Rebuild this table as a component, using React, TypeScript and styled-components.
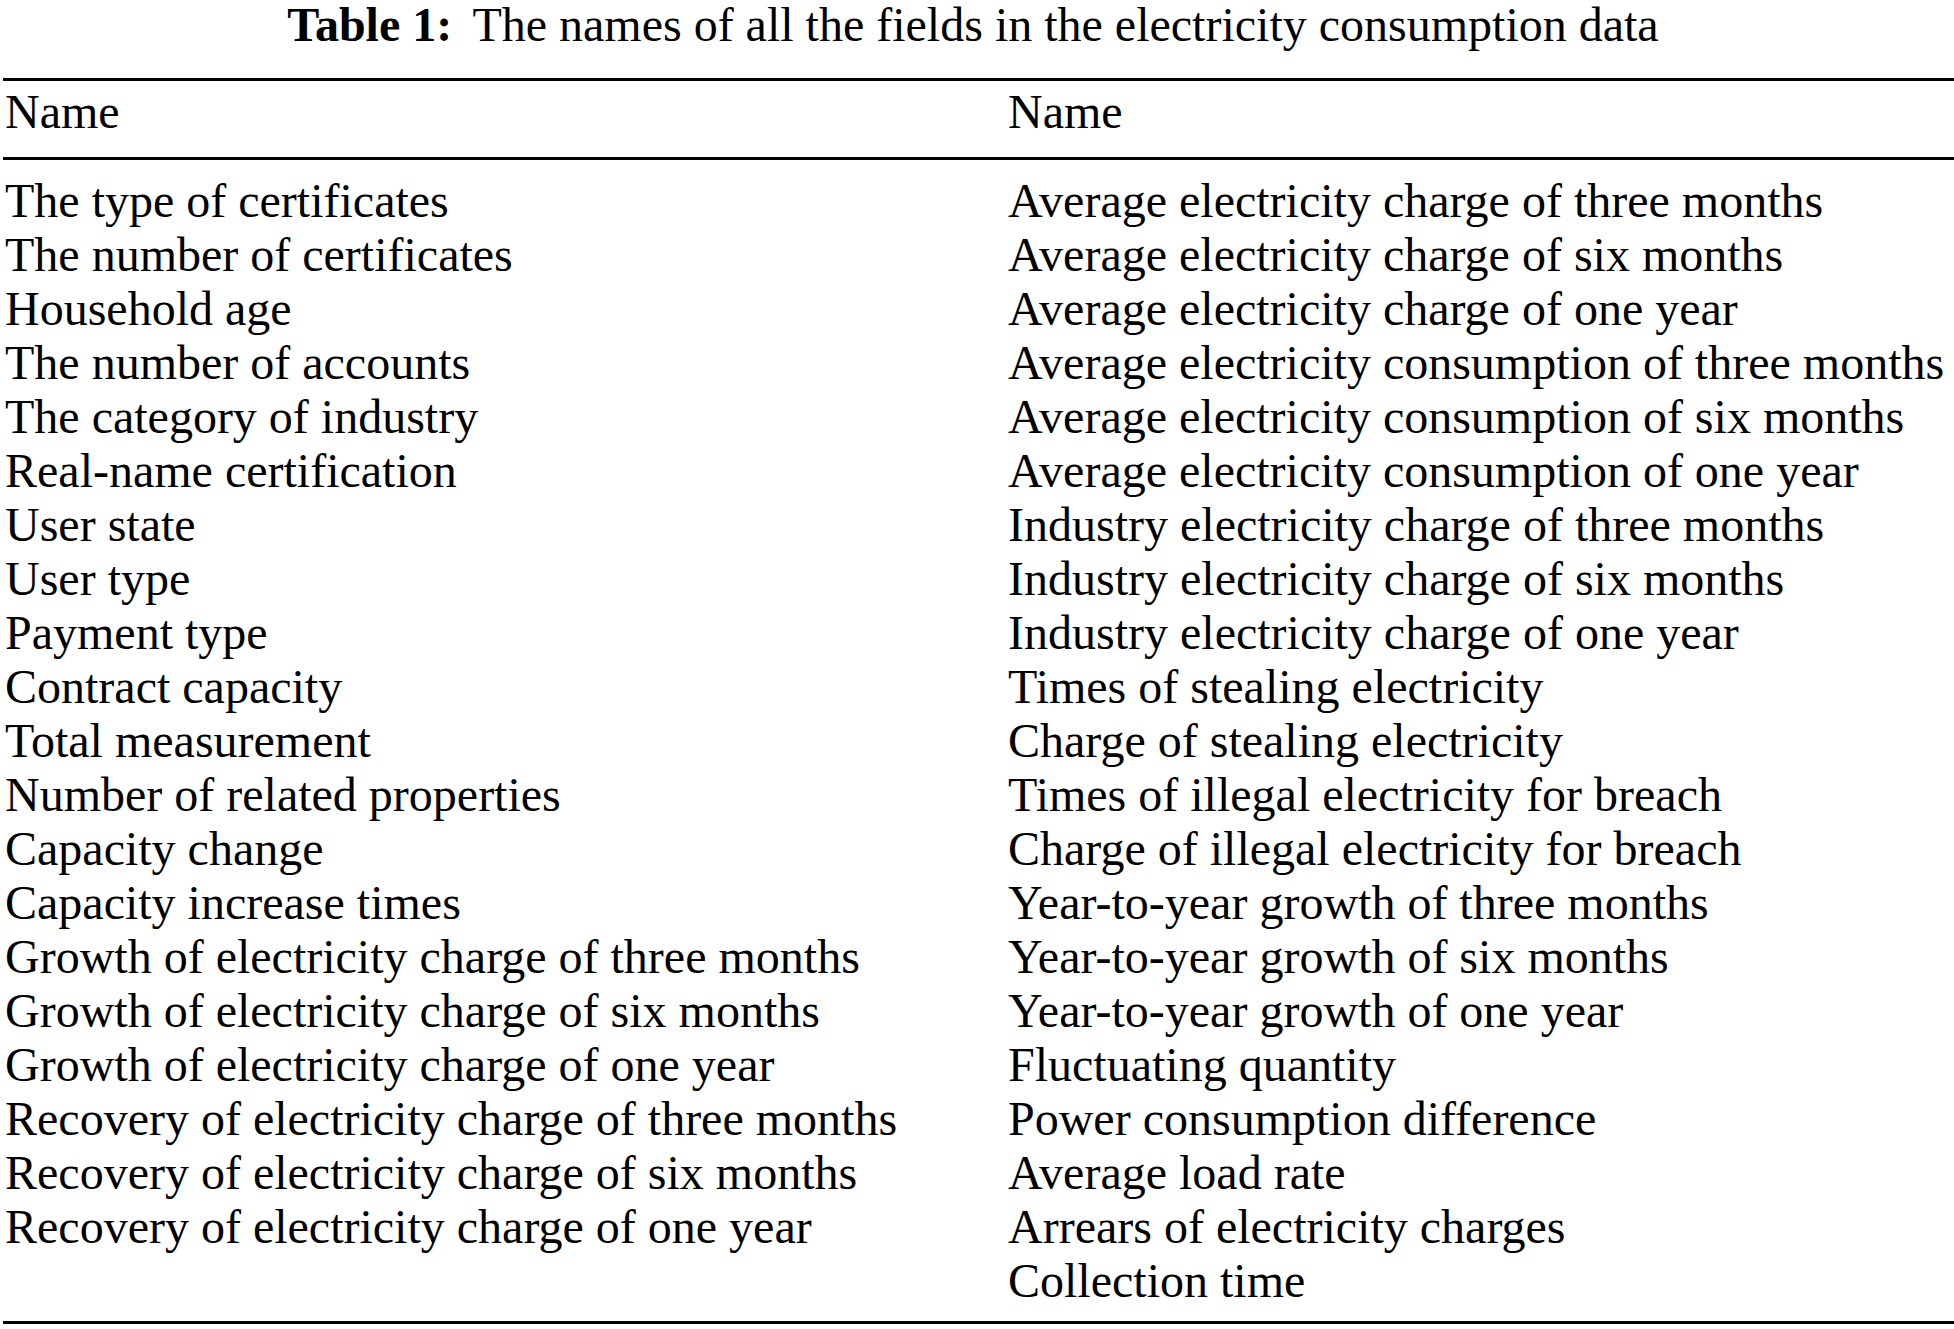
import React from 'react';
import styled, { createGlobalStyle } from 'styled-components';

const GlobalStyle = createGlobalStyle`
  html, body {
    margin: 0;
    padding: 0;
    background: #fff;
  }
  body {
    font-family: "Liberation Serif", "Times New Roman", serif;
    color: #000;
  }
`;

const Page = styled.div`
  width: 1954px;
  font-size: 48px;
`;

const Caption = styled.div`
  text-align: center;
  line-height: 50px;
  height: 50px;
  padding-right: 8px;
  white-space: nowrap;
`;

const CaptionLabel = styled.b`
  font-weight: 700;
  margin-right: 9px;
`;

const Table = styled.div`
  margin: 28px 0 0 3px;
  border-top: 3px solid #000;
  border-bottom: 3px solid #000;
`;

const Section = styled.div<{ padTop: number; padBottom: number; ruled?: boolean }>`
  display: grid;
  grid-template-columns: 1003px 1fr;
  grid-auto-rows: 54px;
  padding: ${({ padTop }) => padTop}px 0 ${({ padBottom }) => padBottom}px;
  border-bottom: ${({ ruled }) => (ruled ? '3px solid #000' : 'none')};
`;

const Cell = styled.div`
  line-height: 54px;
  white-space: nowrap;
  padding-left: 2px;
`;

const left = [
  'The type of certificates',
  'The number of certificates',
  'Household age',
  'The number of accounts',
  'The category of industry',
  'Real-name certification',
  'User state',
  'User type',
  'Payment type',
  'Contract capacity',
  'Total measurement',
  'Number of related properties',
  'Capacity change',
  'Capacity increase times',
  'Growth of electricity charge of three months',
  'Growth of electricity charge of six months',
  'Growth of electricity charge of one year',
  'Recovery of electricity charge of three months',
  'Recovery of electricity charge of six months',
  'Recovery of electricity charge of one year',
];

const right = [
  'Average electricity charge of three months',
  'Average electricity charge of six months',
  'Average electricity charge of one year',
  'Average electricity consumption of three months',
  'Average electricity consumption of six months',
  'Average electricity consumption of one year',
  'Industry electricity charge of three months',
  'Industry electricity charge of six months',
  'Industry electricity charge of one year',
  'Times of stealing electricity',
  'Charge of stealing electricity',
  'Times of illegal electricity for breach',
  'Charge of illegal electricity for breach',
  'Year-to-year growth of three months',
  'Year-to-year growth of six months',
  'Year-to-year growth of one year',
  'Fluctuating quantity',
  'Power consumption difference',
  'Average load rate',
  'Arrears of electricity charges',
  'Collection time',
];

export default function App() {
  const count = Math.max(left.length, right.length);
  const rows = Array.from({ length: count }, (_, i) => [left[i] || '', right[i] || '']);

  return (
    <Page>
      <GlobalStyle />
      <Caption>
        <CaptionLabel>Table 1:</CaptionLabel> The names of all the fields in the electricity consumption data
      </Caption>
      <Table>
        <Section padTop={4} padBottom={18} ruled>
          <Cell>Name</Cell>
          <Cell>Name</Cell>
        </Section>
        <Section padTop={14} padBottom={13}>
          {rows.map(([a, b], i) => (
            <React.Fragment key={i}>
              <Cell>{a}</Cell>
              <Cell>{b}</Cell>
            </React.Fragment>
          ))}
        </Section>
      </Table>
    </Page>
  );
}
